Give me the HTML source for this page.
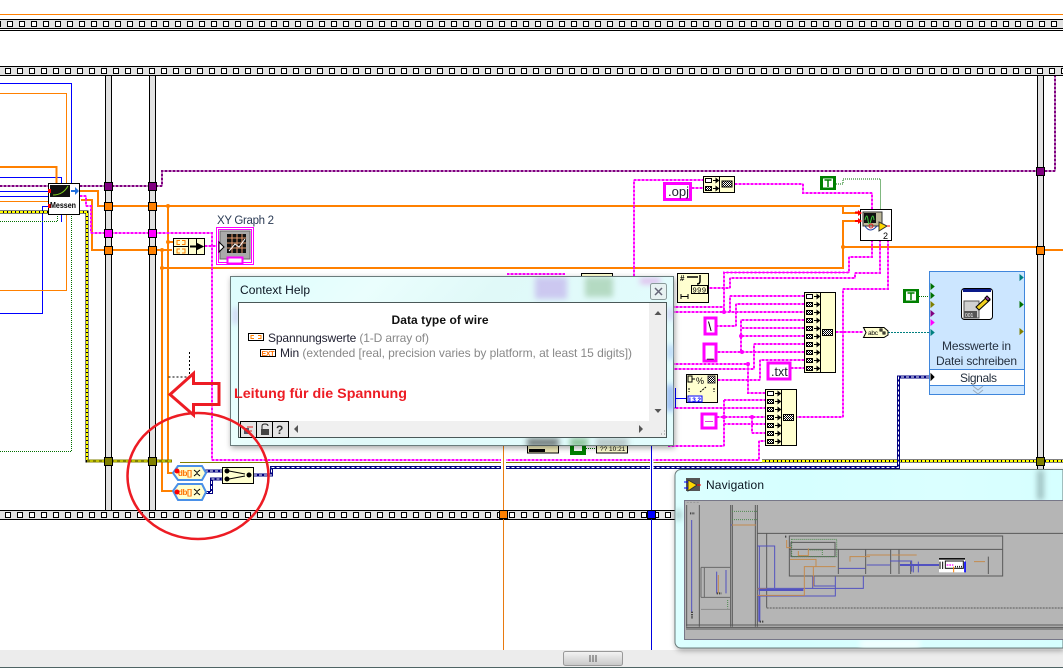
<!DOCTYPE html>
<html><head><meta charset="utf-8"><style>
html,body{margin:0;padding:0;background:#fff;width:1063px;height:668px;overflow:hidden}
svg{display:block;font-family:"Liberation Sans",sans-serif}
.c *{shape-rendering:crispEdges}
.p1{fill:none;stroke:#f0f;stroke-width:1;shape-rendering:crispEdges}
.p2{fill:none;stroke:#f0f;stroke-width:2;stroke-dasharray:2 2;shape-rendering:crispEdges}
.u1{fill:none;stroke:#800080;stroke-width:1;shape-rendering:crispEdges}
.u2{fill:none;stroke:#800080;stroke-width:2;stroke-dasharray:2 2;shape-rendering:crispEdges}
.o{fill:none;stroke:#ff8000;stroke-width:2}
.o1{fill:none;stroke:#ff8000;stroke-width:1}
.b1{fill:none;stroke:#00f;stroke-width:1}
.g{fill:none;stroke:#007000;stroke-width:1;stroke-dasharray:1 1}
.n{fill:none;stroke:#000080;stroke-width:3}
.nw{fill:none;stroke:#fff;stroke-width:1;stroke-dasharray:3 2}
.node{fill:#ffffd0;stroke:#000;stroke-width:1}
.ln{fill:none;stroke:#595959;stroke-width:3}
.lb{fill:none;stroke:#5252c0;stroke-width:3}
.lo{fill:none;stroke:#c48a4e;stroke-width:3}
.lg{fill:none;stroke:#4f8a4f;stroke-width:3;stroke-dasharray:3 3}
</style></head><body>
<svg width="1063" height="668" viewBox="0 0 1063 668" xmlns="http://www.w3.org/2000/svg">
<defs>
<pattern id="sq1" x="4" y="0" width="12" height="668" patternUnits="userSpaceOnUse"><rect x="3.500" y="21.500" width="5" height="5" fill="#fff" stroke="#000"/></pattern>
<pattern id="sq2" x="2" y="0" width="12" height="668" patternUnits="userSpaceOnUse"><rect x="3.500" y="68.500" width="5" height="5" fill="#fff" stroke="#000"/></pattern>
<pattern id="sq3" x="2" y="0" width="12" height="668" patternUnits="userSpaceOnUse"><rect x="3.500" y="512.500" width="5" height="5" fill="#fff" stroke="#000"/></pattern>
<pattern id="chk" width="2" height="2" patternUnits="userSpaceOnUse"><rect width="2" height="2" fill="#fff"/><rect width="1" height="1" fill="#000"/><rect x="1" y="1" width="1" height="1" fill="#000"/></pattern>
<g id="r1"><rect x=".5" y=".5" width="6" height="4" fill="#fff" stroke="#000"/><path d="M8 2.500h5M11 0.500l2.500 2-2.500 2z" fill="#000" stroke="#000"/></g>
<g id="r2"><rect x=".5" y=".5" width="6" height="4" fill="url(#chk)" stroke="#000"/><path d="M8 2.500h5M11 0.500l2.500 2-2.500 2z" fill="#000" stroke="#000"/></g>
<path id="pw1" d="M80 196H86V206H91V233H212V460H759V441H765M205 246H217"/>
<path id="pw2" d="M634 276V180H703M692 188H703M735 184H803V193H872V209M872 240V257H849V272.700H724V312M880 240V273H855V278H730V288H709M888 240V289H843V417H797"/>
<path id="pw3" d="M668 307H724M668 312H804M804 296H730V312M804 304H736V326H717M804 320H741V352M804 328H742M804 336H741M804 344H754V369H668M804 352H717M804 360H760V380H718M668 364H748V393H765M791 368H804M836 332H863"/>
<path id="pw4" d="M668 408H765M724 400H765M724 400V446H668M717 417H765M724 424H765M752 417V433H765"/>
<path id="pw5" d="M507 274H565"/>
<path id="uw" d="M0 186H48M80 186H162V171H1055V76"/>
<linearGradient id="glass" x1="0" y1="0" x2="1" y2="0.35"><stop offset="0" stop-color="#dcfdfd"/><stop offset=".3" stop-color="#eafefd"/><stop offset=".55" stop-color="#e0f9f8"/><stop offset="1" stop-color="#e2fcfd"/></linearGradient>
<linearGradient id="glass2" x1="0" y1="0" x2="1" y2="0"><stop offset="0" stop-color="#dcffff"/><stop offset=".3" stop-color="#d6ffff"/><stop offset=".7" stop-color="#daffff"/><stop offset="1" stop-color="#d6ffff"/></linearGradient>
<linearGradient id="thumb" x1="0" y1="0" x2="0" y2="1"><stop offset="0" stop-color="#f4f4f4"/><stop offset=".5" stop-color="#dedede"/><stop offset="1" stop-color="#c8c8c8"/></linearGradient>
<filter id="bl" x="-30%" y="-30%" width="160%" height="160%"><feGaussianBlur stdDeviation="3"/></filter>
<filter id="sh" x="-5%" y="-5%" width="110%" height="112%"><feDropShadow dx="1" dy="2" stdDeviation="3" flood-color="#000" flood-opacity=".35"/></filter>
<clipPath id="hc"><rect x="231" y="277" width="443" height="169"/></clipPath>
<clipPath id="nc"><rect x="676" y="470" width="387" height="178"/></clipPath>
</defs>

<g class="c">
<!-- top -->
<rect x="0" y="14" width="1063" height="1" fill="#ff8000"/>
<rect x="0" y="19" width="1063" height="10" fill="#e2e2e2"/>
<rect x="0" y="19" width="1063" height="1" fill="#000"/>
<rect x="0" y="28" width="1063" height="1" fill="#000"/>
<rect x="0" y="30" width="1063" height="1" fill="#000"/>
<rect x="0" y="20" width="1063" height="8" fill="url(#sq1)"/>
<!-- strip 2 -->
<rect x="0" y="66" width="1063" height="10" fill="#e2e2e2"/>
<rect x="0" y="66" width="1063" height="1" fill="#000"/>
<rect x="0" y="75" width="1063" height="1" fill="#000"/>
<rect x="0" y="67" width="1063" height="8" fill="url(#sq2)"/>
<!-- bottom strip -->
<rect x="0" y="510" width="1063" height="10" fill="#e2e2e2"/>
<rect x="0" y="510" width="1063" height="1" fill="#000"/>
<rect x="0" y="519" width="1063" height="1" fill="#000"/>
<rect x="0" y="511" width="1063" height="8" fill="url(#sq3)"/>
<!-- vertical bars -->
<rect x="105" y="76" width="7" height="434" fill="#e2e2e2"/><path d="M105.500 76V510M111.500 76V510" stroke="#000" fill="none"/>
<rect x="149" y="76" width="7" height="434" fill="#e2e2e2"/><path d="M149.500 76V510M155.500 76V510" stroke="#000" fill="none"/>
<rect x="1037" y="76" width="7" height="434" fill="#e2e2e2"/><path d="M1037.500 76V510M1043.500 76V510" stroke="#000" fill="none"/>

<!-- left thin wires -->
<path class="b1" d="M0 83.500H71.500V186M0 177.500H61.500V222M0 191.500H48M0 196.500H48M48 206.500H42.500V313.500H0"/>
<path class="o1" d="M0 93.500H66.500V290.500H0M0 201.500H48"/>
<path class="g" d="M0 221.500H57.500V214M71.500 214V451.500H0"/>
<path class="o" d="M0 167H56.500V183"/>
<use href="#uw" class="u1"/><use href="#uw" class="u2"/>
<path class="o" d="M80 191H98V206H860M843 206V213H860M160 268H843V221H860M843 247H1036M1044 250H1063M81 200H92V250H172M168 206V473H175M162 250V491H175M168 242H173"/>
<use href="#pw1" class="p1"/><use href="#pw1" class="p2"/>
<!-- hazard -->
<path fill="none" stroke="#000" stroke-width="3" d="M0 212H48M80 212H87V461H110"/>
<path fill="none" stroke="#ffff00" stroke-width="2" stroke-dasharray="3 1" d="M0 212H48M80 212H87V461H105"/>
<path fill="none" stroke="#808000" stroke-width="3" d="M87 461H172"/>
<path fill="none" stroke="#ffff00" stroke-width="1" stroke-dasharray="3 3" d="M90 461H172"/>
<path fill="none" stroke="#808000" stroke-width="1" d="M180 462.500H762"/>
<path fill="none" stroke="#000" stroke-width="3" d="M762 461H1063"/>
<path fill="none" stroke="#ffff00" stroke-width="2" stroke-dasharray="3 1" d="M762 461H1063"/>

<!-- navy -->
<path class="n" d="M205 471H222M205 492.500H211.500V479H222M254 475H271.500V467.500H898.500V377H929"/>
<path class="nw" d="M205 471H222M205 492.500H211.500V479H222M254 475H271.500V467.500H898.500V377H929"/>

<!-- gaps and vertical thin -->
<rect x="501" y="458" width="5" height="12" fill="#fff"/>
<rect x="650" y="458" width="3.500" height="12" fill="#fff"/>
<path d="M503.500 440V650" stroke="#e87a10" fill="none"/>
<path d="M651.500 440V650" stroke="#0000e0" fill="none"/>
<rect x="499.500" y="510.500" width="8" height="8" fill="#ff8000" stroke="#000"/>
<rect x="647.500" y="510.500" width="8" height="8" fill="#00f" stroke="#000"/>

<!-- dotted cross -->
<path d="M189.500 352V377H168" fill="none" stroke="#000" stroke-dasharray="2 2"/>

<!-- terminals -->
<g stroke="#000">
<rect x="104.500" y="182.500" width="8" height="8" fill="#800080"/><rect x="148.500" y="182.500" width="8" height="8" fill="#800080"/>
<rect x="104.500" y="202.500" width="8" height="8" fill="#ff8000"/><rect x="148.500" y="202.500" width="8" height="8" fill="#ff8000"/>
<rect x="104.500" y="229.500" width="8" height="8" fill="#f0f"/><rect x="148.500" y="229.500" width="8" height="8" fill="#f0f"/>
<rect x="104.500" y="246.500" width="8" height="8" fill="#ff8000"/><rect x="148.500" y="246.500" width="8" height="8" fill="#ff8000"/>
<rect x="104.500" y="457.500" width="8" height="8" fill="#808000"/><rect x="148.500" y="457.500" width="8" height="8" fill="#808000"/>
<rect x="1036.500" y="167.500" width="8" height="8" fill="#800080"/>
<rect x="1036.500" y="246.500" width="8" height="8" fill="#ff8000"/>
<rect x="1036.500" y="457.500" width="8" height="8" fill="#808000"/>
</g>

<!-- right pink wires -->
<use href="#pw2" class="p1"/><use href="#pw2" class="p2"/>
<use href="#pw3" class="p1"/><use href="#pw3" class="p2"/>
<use href="#pw4" class="p1"/><use href="#pw4" class="p2"/>
<path class="g" d="M836 184H843V179H880.500V209M919 296.500H929"/>
<path d="M888 332.500H929" fill="none" stroke="#008080" stroke-dasharray="2 1"/>
<path class="b1" d="M675.500 388V408M675 398.500H686"/>
</g>

<!-- junction dots -->
<g fill="#ff8000"><circle cx="168" cy="206" r="2"/><circle cx="168" cy="242" r="2"/><circle cx="162" cy="250" r="2"/><circle cx="162" cy="268" r="2"/><circle cx="843" cy="247" r="2"/></g>
<g fill="#f0f"><circle cx="724" cy="312" r="2"/><circle cx="741" cy="336" r="2"/><circle cx="742" cy="352" r="2"/><circle cx="748" cy="364" r="2"/><circle cx="724" cy="417" r="2"/><circle cx="752" cy="417" r="2"/></g>

<!-- Messen -->
<rect x="48.500" y="183.500" width="31" height="31" fill="#fff" stroke="#000"/>
<rect x="50" y="185" width="20" height="12" fill="#111"/>
<path d="M53 195q10 0 15-9" fill="none" stroke="#7fd020"/>
<path d="M71 190h4v-3l4 4-4 4v-3h-4z" fill="#2070e0"/>
<rect x="48" y="189" width="3" height="4" fill="#f00"/><rect x="48" y="204" width="3" height="4" fill="#f00"/>
<text x="50" y="208" font-size="8" font-weight="bold" textLength="26" lengthAdjust="spacingAndGlyphs">Messen</text>

<!-- Build array -->
<rect x="173.500" y="238.500" width="31" height="16" fill="#ffffd0" stroke="#000"/>
<path d="M188.500 238.500V254.500M196.500 238.500V254.500M173.500 246.500H188" stroke="#000" fill="none"/>
<g fill="none" stroke="#ff8000"><path d="M180 240.500h-3v4h3M182 240.500h3v4h-3M180 249h-3v4h3M182 249h3v4h-3"/></g>
<path d="M190 246.500H197M197 244l5 2.500-5 2.500z" fill="#000" stroke="#000" stroke-width="2"/>

<!-- XY Graph -->
<text x="217" y="224" font-size="11.500" fill="#2b3b55" textLength="57">XY Graph 2</text>
<rect x="216.500" y="227.500" width="37" height="37" fill="#fff" stroke="#f0f"/>
<rect x="218.500" y="229.500" width="33" height="33" fill="#fff" stroke="#f0f"/>
<rect x="220" y="231" width="30" height="28" fill="#aaa" stroke="#666"/>
<rect x="227" y="234" width="19" height="19" fill="#111"/>
<path d="M227 238h19M227 243h19M227 248h19M232 234v19M237 234v19M242 234v19" stroke="#e89a70" fill="none"/>
<path d="M229 251l6-7 4 3 6-8" stroke="#fff" fill="none"/>
<path d="M219 242l5 5-5 5z" fill="#fff" stroke="#000"/>
<rect x="227.500" y="257.500" width="15" height="6" fill="#fff" stroke="#f0f" stroke-width="2"/>

<!-- array min nodes -->
<g>
<path d="M173 473l5-7h24l4 7-4 7h-24z" fill="#ffffd0" stroke="#4a90e8" stroke-width="2"/>
<path d="M173 491l5-7h24l4 8-4 8h-24z" fill="#ffffd0" stroke="#4a90e8" stroke-width="2"/>
<text x="178" y="476" font-size="8" fill="#ff7000" font-weight="bold" textLength="14">db[]</text>
<text x="178" y="495" font-size="8" fill="#ff7000" font-weight="bold" textLength="14">db[]</text>
<path d="M194 470l3 2.500 3-2.500M194 476l3-2.500 3 2.500M194 489l3 2.500 3-2.500M194 495l3-2.500 3 2.500" fill="none" stroke="#000"/>
<circle cx="177" cy="471" r="2.500" fill="#f00"/><circle cx="177" cy="492" r="2.500" fill="#f00"/>
</g>
<!-- merge -->
<rect x="222.500" y="467.500" width="31" height="16" fill="#ffffd0" stroke="#000"/>
<circle cx="227" cy="471" r="2.500"/><circle cx="227" cy="479" r="2.500"/><circle cx="249" cy="475" r="2.500"/>
<path d="M229 471l16 3M229 479l16-3" fill="none" stroke="#000"/>

<!-- .opj -->
<rect x="664.500" y="183.500" width="26" height="16" fill="#fff" stroke="#f0f" stroke-width="3"/>
<text x="668" y="196" font-size="13" fill="#223">.opj</text>
<!-- concat 1 -->
<rect class="node" x="703.500" y="176.500" width="31" height="16"/><path d="M719.500 176.500V192.500" stroke="#000"/>
<use href="#r1" x="705" y="178"/><use href="#r2" x="705" y="186"/>
<rect x="722" y="181" width="10" height="6" fill="url(#chk)" stroke="#000"/>
<!-- T -->
<rect x="820" y="176" width="16" height="14" fill="#008000"/><rect x="823" y="178.500" width="10" height="9" fill="#fff"/>
<path d="M824.500 180h7M828 180v7" stroke="#008000" stroke-width="1.500"/>
<!-- node DAQ -->
<rect x="860.500" y="209.500" width="31" height="31" fill="#fff" stroke="#000"/>
<rect x="863" y="212" width="19" height="14" fill="#bdb89a" stroke="#333"/>
<rect x="864" y="213" width="12" height="10" fill="#111"/>
<path d="M865 220q2-8 3 0t3 0 3 0" stroke="#40d040" fill="none"/>
<path d="M865 226q5 8 12 0" stroke="#2040a0" fill="none"/><circle cx="871" cy="226" r="2" fill="none" stroke="#e02020"/>
<path d="M879 222l8 4-8 5z" fill="#ffd800" stroke="#333"/><path d="M887 226h3" stroke="#e00"/>
<path d="M855 212.500h5M855 221h5" stroke="#f00" stroke-width="2"/><path d="M858 210l4 3-4 3zM858 218l4 3-4 3z" fill="#f00"/>
<text x="883" y="239" font-size="9">2</text>
<!-- 999 node -->
<rect x="677.500" y="273.500" width="31" height="29" fill="#ffffd0" stroke="#000"/>
<text x="680" y="281" font-size="8" font-weight="bold">#</text>
<path d="M687 277h11M700 275v6q0 3-3 3" fill="none" stroke="#000" stroke-width="1.500"/>
<rect x="691.500" y="285.500" width="16" height="8" fill="none" stroke="#000"/>
<text x="692.500" y="292.500" font-size="7.500" letter-spacing=".5">999</text>
<path d="M681 294v5M688 294v5M681 296.500h7" stroke="#000" fill="none"/>
<!-- big concat -->
<rect class="node" x="804.500" y="292.500" width="31" height="80"/><path d="M820.500 292.500V372.500" stroke="#000"/>
<use href="#r1" x="806" y="294"/><use href="#r2" x="806" y="302"/><use href="#r2" x="806" y="310"/><use href="#r2" x="806" y="318"/><use href="#r2" x="806" y="326"/><use href="#r2" x="806" y="334"/><use href="#r2" x="806" y="342"/><use href="#r2" x="806" y="350"/><use href="#r2" x="806" y="358"/><use href="#r2" x="806" y="366"/>
<rect x="822.500" y="329.500" width="10" height="6" fill="url(#chk)" stroke="#000"/>
<!-- \ and _ -->
<rect x="705" y="318" width="11" height="16" fill="#fff" stroke="#f0f" stroke-width="3"/><text x="708" y="331" font-size="13">\</text>
<rect x="704" y="344" width="12" height="17" fill="#fff" stroke="#f0f" stroke-width="3"/><text x="707" y="357" font-size="12">_</text>
<rect x="768" y="363" width="22" height="16" fill="#fff" stroke="#f0f" stroke-width="3"/><text x="771" y="376" font-size="12.500" fill="#223">.txt</text>
<rect x="702" y="414" width="14" height="14" fill="#fff" stroke="#f0f" stroke-width="3"/><path d="M705 421.500h8" stroke="#e040e0"/>
<!-- % node -->
<rect x="686.500" y="374.500" width="31" height="28" fill="#ffffd0" stroke="#000"/>
<text x="696" y="384" font-size="9" textLength="9">%</text>
<rect x="708" y="376" width="7" height="7" fill="url(#chk)" stroke="#333"/>
<path d="M688 376h4v6h-4zM692 379h3" fill="none" stroke="#000"/>
<path d="M689 388v4M714 388v4M700 392l6-5" stroke="#000" fill="none" stroke-dasharray="2 1"/>
<rect x="688" y="396" width="14" height="6" fill="#fff" stroke="#00f"/><text x="689" y="402" font-size="6.500" font-weight="bold" fill="#00f" textLength="12">I32</text>
<!-- node 3 -->
<rect class="node" x="765.500" y="389.500" width="31" height="56"/><path d="M781.500 389.500V445.500" stroke="#000"/>
<use href="#r1" x="767" y="391"/><use href="#r2" x="767" y="399"/><use href="#r2" x="767" y="407"/><use href="#r2" x="767" y="415"/><use href="#r2" x="767" y="423"/><use href="#r2" x="767" y="431"/><use href="#r2" x="767" y="439"/>
<rect x="783.500" y="414.500" width="10" height="6" fill="url(#chk)" stroke="#000"/>
<!-- abc -->
<path d="M863.500 327.500H884L888 331V335L884 337.500H863.500L866 332.500z" fill="#ffffd0" stroke="#000"/>
<text x="868" y="335" font-size="6.500" textLength="10">abc</text>
<rect x="880" y="329" width="2" height="2" fill="none" stroke="#000"/><rect x="883" y="332" width="2" height="2" fill="none" stroke="#000"/>
<!-- T2 -->
<rect x="903" y="289" width="16" height="14" fill="#008000"/><rect x="906" y="291.500" width="10" height="9" fill="#fff"/>
<path d="M907.500 293h7M911 293v7" stroke="#008000" stroke-width="1.500"/>
<!-- Express VI -->
<rect x="929.500" y="271.500" width="95" height="123" fill="#cce6ff" stroke="#3f86dc"/>
<rect x="930" y="370" width="94" height="15" fill="#fff"/>
<path d="M930 369.500H1024M930 385.500H1024" stroke="#3f86dc"/>
<rect x="961.500" y="288.500" width="31" height="31" rx="3" fill="#fff" stroke="#000"/>
<rect x="963" y="289" width="28" height="3" fill="#0a1a8a"/>
<rect x="964" y="301" width="15" height="17" fill="#d0d0d0" stroke="#555"/>
<rect x="964" y="311" width="13" height="7" fill="#555"/>
<text x="965" y="317" font-size="5" fill="#fff">001</text>
<path d="M976 307l11-10 3 3-11 10z" fill="#f0d020" stroke="#000"/><path d="M985 298l2-2 3 3-2 2z" fill="#a040a0" stroke="#000"/>
<text x="942" y="350" font-size="12" fill="#25303f" textLength="69">Messwerte in</text>
<text x="936" y="365" font-size="12" fill="#25303f" textLength="81">Datei schreiben</text>
<text x="960" y="382" font-size="12" fill="#25303f" textLength="37">Signals</text>
<path d="M931 374l3 3-3 3z" fill="#000" stroke="#000"/>
<path d="M973 386l5 4 5-4M973 390l5 4 5-4" fill="none" stroke="#9ab"/>
<path d="M931 284l3 2.500-3 2.500zM931 293l3 2.500-3 2.500z" fill="#007000" stroke="#007000"/>
<path d="M931 302l3 2.500-3 2.500z" fill="#808000" stroke="#808000"/>
<path d="M931 311l3 2.500-3 2.500z" fill="#800080" stroke="#800080"/>
<path d="M931 320l3 2.500-3 2.500z" fill="#f0f" stroke="#f0f"/>
<path d="M931 330l3 2.500-3 2.500z" fill="#008080" stroke="#008080"/>
<path d="M1020 275l3 2.500-3 2.500z" fill="#008080" stroke="#008080"/>
<path d="M1020 302l3 2.500-3 2.500z" fill="#007000" stroke="#007000"/>
<path d="M1020 329l3 2.500-3 2.500z" fill="#808000" stroke="#808000"/>

<!-- things peeking below/above help -->
<use href="#pw5" class="p1"/><use href="#pw5" class="p2"/>
<rect x="581.500" y="273.500" width="31" height="6" fill="#ffffd0" stroke="#000"/>
<rect x="527.500" y="444" width="31" height="9" fill="#eee9b8" stroke="#000"/><path d="M529 449h16v3h-16z" fill="#000"/>
<rect x="570" y="444" width="16" height="11" fill="#008000"/><rect x="574" y="444" width="8" height="7" fill="#fff"/>
<path d="M586 448.500h10" stroke="#007000" stroke-dasharray="1 1"/>
<rect x="596.500" y="444" width="31" height="9" fill="#ffffd0" stroke="#000"/><text x="600" y="451" font-size="6.500">?? 10:21</text>

<!-- Help window -->
<g filter="url(#sh)"><rect x="230.500" y="276.500" width="443" height="169" fill="url(#glass)" stroke="#6b7b7b"/></g>
<g clip-path="url(#hc)">
<g filter="url(#bl)">
<rect x="535" y="277" width="32" height="22" fill="#b9a0ea" opacity=".55"/>
<rect x="585" y="277" width="28" height="20" fill="#8fbf95" opacity=".55"/>
<rect x="233" y="308" width="5" height="16" fill="#b9a0ea" opacity=".5"/>
<rect x="667" y="308" width="7" height="12" fill="#c0a0f0" opacity=".4"/>
<rect x="667" y="345" width="7" height="14" fill="#9fc0f5" opacity=".6"/>
<rect x="666" y="385" width="8" height="26" fill="#7da0f0" opacity=".7"/>
<rect x="527" y="438" width="32" height="9" fill="#333" opacity=".6"/>
<rect x="570" y="438" width="18" height="9" fill="#3a8a3a" opacity=".5"/>
<rect x="596" y="438" width="32" height="9" fill="#777" opacity=".4"/>
<rect x="640" y="278" width="20" height="6" fill="#e080e0" opacity=".5"/>
</g>
</g>
<rect x="238.500" y="302.500" width="428" height="135" fill="#fff" stroke="#4a5858"/>
<text x="240" y="294" font-size="12" fill="#0a1420" textLength="70">Context Help</text>
<rect x="650.500" y="283.500" width="16" height="16" rx="2" fill="#e8f2f2" stroke="#8a9a9a"/>
<path d="M655 288l7 7M662 288l-7 7" stroke="#667" stroke-width="1.500"/>
<rect x="649" y="303" width="17" height="134" fill="#eee"/>
<rect x="239" y="421" width="410" height="16" fill="#eee"/>
<rect x="297" y="421" width="340" height="16" fill="#f0f0f0"/>
<path d="M658 311l-3.500 4h7zM658 413l-3.500-4h7z" fill="#555"/>
<path d="M298 425l-4 4 4 4zM639 425l4 4-4 4z" fill="#555"/>
<text x="440" y="324" font-size="12" font-weight="bold" text-anchor="middle" textLength="97" fill="#111">Data type of wire</text>
<rect x="248.500" y="333.500" width="15" height="7" fill="#fff" stroke="#000"/>
<path d="M254 335.500h-3v3h3M258 335.500h3v3h-3" fill="none" stroke="#ff8000"/>
<text x="268" y="342" font-size="12" textLength="161"><tspan fill="#223">Spannungswerte</tspan><tspan fill="#888"> (1-D array of)</tspan></text>
<rect x="260.500" y="349.500" width="15" height="7" fill="#fff" stroke="#000"/>
<text x="261.500" y="356" font-size="7" font-weight="bold" fill="#ff7000" textLength="13">EXT</text>
<text x="280" y="357" font-size="12" textLength="352"><tspan fill="#223">Min</tspan><tspan fill="#888"> (extended [real, precision varies by platform, at least 15 digits])</tspan></text>
<g stroke="#000" fill="#e4e4e4"><rect x="240.500" y="421.500" width="16" height="16"/><rect x="256.500" y="421.500" width="16" height="16"/><rect x="272.500" y="421.500" width="16" height="16"/></g>
<path d="M247 427h6M247 431h5" stroke="#e02020"/><rect x="244" y="428" width="5" height="6" fill="#556"/>
<rect x="261" y="429" width="8" height="6" fill="#444"/><path d="M262 429v-3q0-2 3-2t3 2" fill="none" stroke="#222"/>
<text x="276" y="434" font-size="12" font-weight="bold" fill="#333">?</text>
<path d="M664 434h1M661 434h1M664 431h1" stroke="#888"/>

<text x="234" y="398" font-size="13.500" font-weight="bold" fill="#ed1c24" textLength="173" lengthAdjust="spacingAndGlyphs">Leitung für die Spannung</text>

<!-- red annotations -->
<path d="M170 394.500L193.500 373.500V383.500H219V404.500H193.500V415z" fill="none" stroke="#ed1c24" stroke-width="3"/>
<ellipse cx="198" cy="476" rx="70.500" ry="63" fill="none" stroke="#ed1c24" stroke-width="2.500"/>

<!-- bottom scrollbar -->
<rect x="0" y="650" width="1063" height="17" fill="#ececec"/>
<rect x="0" y="667" width="1063" height="1" fill="#4f6464"/>
<rect x="563.500" y="651.500" width="59" height="14" rx="2" fill="url(#thumb)" stroke="#999"/>
<path d="M590 655v7M593 655v7M596 655v7" stroke="#555"/>

<!-- Navigation -->
<g filter="url(#sh)"><path d="M1063 469.500H681a6 6 0 0 0-6 6V642a6 6 0 0 0 6 6H1063z" fill="url(#glass2)" stroke="#6b7b7b"/></g>
<g clip-path="url(#nc)"><g filter="url(#bl)">
<rect x="1037" y="470" width="7" height="30" fill="#7a9a9a" opacity=".6"/>
<rect x="676" y="510" width="5" height="10" fill="#7a9a9a" opacity=".6"/>
<rect x="860" y="640" width="60" height="8" fill="#fff" opacity=".7"/>
</g></g>
<rect x="686" y="478" width="14" height="13" fill="#555"/>
<path d="M688 480l9 5-9 6z" fill="#ffd800" stroke="#333"/><path d="M684 482h4M684 488h4" stroke="#00f"/><path d="M697 485h4" stroke="#f00"/>
<text x="706" y="489" font-size="12" fill="#0a1420" textLength="58">Navigation</text>
<rect x="684.500" y="500.500" width="379" height="139" fill="#b5b5b5" stroke="#778"/>
<g transform="translate(670 465) scale(.33333)">
<path class="ln" d="M50 120V485M88 120V485M182 120V485M187 120V485M256 120V485M262 120V485M48 480H1179M48 487H1179M48 492H1179"/>
<path d="M93 307H180M93 397H180M93 307V397M103 307V397" fill="none" stroke="#6a6a6a" stroke-width="3"/>
<path d="M93 433H180" stroke="#8a8a8a" stroke-width="3"/>
<path d="M50 112H88" stroke="#999" stroke-width="3" stroke-dasharray="6 4"/>
<path class="ln" d="M262 205H1179M290 205V428"/>
<path class="ln" stroke-dasharray="6 3" d="M290 429H1179"/>
<path class="ln" d="M358 213H998V333H358V213ZM358 253H998M363 232H495V275H363ZM505 253V327M587 253V327M662 253V327M687 253V327M722 290V327M955 275V327M358 333H998"/>
<path class="lg" d="M186 139H262M186 164H262M365 223H500V275H365ZM415 255H457V272M173 405V430"/>
<path class="lb" d="M65 165V440M182 180H258M262 243H314V370H580V333M268 243V470M262 370H428V333M262 393H496V335M432 335V363H496M140 320V385M168 315V385M506 310H586M590 300H660M660 288H725V320M730 300V322M745 290V322M885 288V322"/>
<path class="lo" d="M186 180H258M262 372H290M262 391H403V305H497M430 305V365M350 225V248H363M385 258V272H415V250M360 283H438V305M540 290V275H600M590 270H660M665 270H740M145 330V385M912 290H945"/>
<path fill="none" stroke="#5252c0" stroke-width="6" d="M266 375H400M268 395V470M690 300H810"/>
<path d="M66 440V462M140 385H155M269 470H280M345 215h6M60 145h15" stroke="#444" stroke-width="6" fill="none" stroke-dasharray="4 3"/>
<rect x="807" y="283" width="78" height="39" fill="#fff"/>
<rect x="807" y="279" width="78" height="5" fill="#111"/>
<rect x="826" y="288" width="54" height="22" fill="none" stroke="#111" stroke-width="3"/>
<path d="M830 300H850" stroke="#f0f" stroke-width="4" stroke-dasharray="5 3"/>
<path d="M851 305V322" stroke="#ff8000" stroke-width="3"/>
<path d="M885 290V322" stroke="#00f" stroke-width="5"/>
<path d="M810 290V312M818 290V312" stroke="#000" stroke-width="3"/>
<path d="M855 305h22" stroke="#222" stroke-width="5" stroke-dasharray="3 3"/>
</g>
</svg>
</body></html>
